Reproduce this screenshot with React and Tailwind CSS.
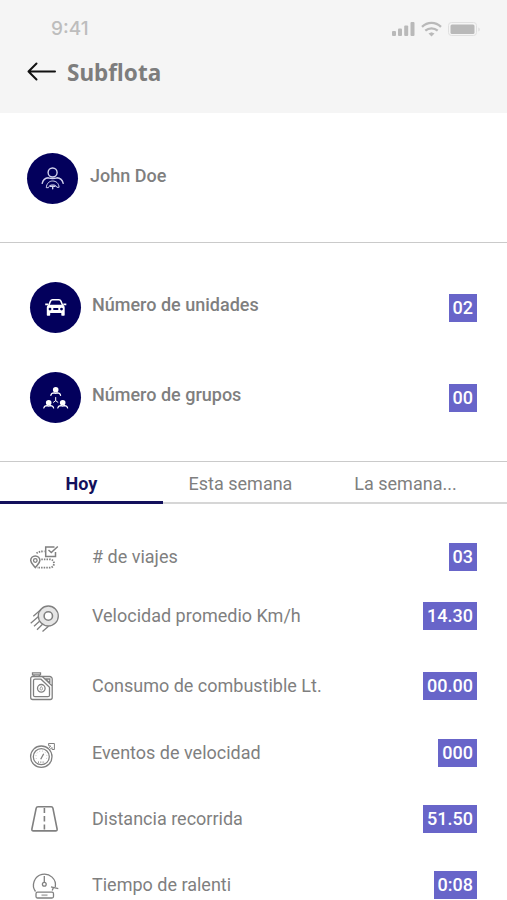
import { useState } from 'react'

const DriverIcon = () => (
  <svg width="51" height="51" viewBox="0 0 51 51" fill="none" stroke="#d3d3ee" strokeWidth="1.400" strokeLinecap="round">
    <circle cx="25.6" cy="19.5" r="4.5" />
    <path d="M15.2 30.3c.8-3.3 2.8-5.3 6-5.5 2.6.8 6.2.8 8.8 0 3.200.2 5.400 2.200 6.200 5.500" />
    <path d="M19.3 34.300c.3-4 3-6.300 6.400-6.300s6.100 2.300 6.400 6.300h-2.200c-.5-1.600-2-2.400-4.200-2.400s-3.700.8-4.200 2.400z" strokeWidth="1" />
    <path d="M23.400 33.300h4.600M25.700 33v2.700" strokeWidth="1.400" />
  </svg>
)

const CarIcon = () => (
  <svg width="51" height="51" viewBox="0 0 51 51" fill="none">
    <path d="M18.700 23.500l1.800-4.400c.4-1 1-1.400 2-1.400h6.400c1 0 1.600.4 2 1.400l1.800 4.400" stroke="#fff" strokeWidth="1.500" />
    <path d="M15.200 21.600h3v1.600h-3zM33.300 21.600h3v1.600h-3z" fill="#fff" />
    <path fillRule="evenodd" fill="#fff" d="M18.500 22.800h14.500c1.100.7 1.700 1.700 1.700 3v7c0 .6-.3 1-1 1h-1.400c-.7 0-1-.4-1-1v-1.700H20.200v1.700c0 .6-.3 1-1 1h-1.400c-.7 0-1-.4-1-1v-7c0-1.300.6-2.300 1.700-3zM20 25.700a1.400 1.400 0 1 0 0 2.800 1.400 1.400 0 0 0 0-2.800zM31.500 25.700a1.400 1.400 0 1 0 0 2.800 1.400 1.400 0 0 0 0-2.800zM23.300 26v2h5v-2z" />
  </svg>
)

const GroupIcon = () => (
  <svg width="51" height="51" viewBox="0 0 51 51" fill="none" stroke="#fff" strokeWidth="1.200" strokeLinecap="round">
    <g fill="#fff" stroke="none">
      <circle cx="25.700" cy="17.800" r="2.800" />
      <circle cx="18.700" cy="30.800" r="2.800" />
      <circle cx="32.700" cy="30.800" r="2.800" />
    </g>
    <path d="M20.800 23.300c.3-1.700 1.500-2.400 3.200-2.400 1 .5 2.400.5 3.400 0 1.700 0 2.900.7 3.200 2.400" />
    <path d="M13.800 36c.3-1.700 1.500-2.400 3.200-2.400 1 .5 2.400.5 3.400 0 1.700 0 2.900.7 3.200 2.400" />
    <path d="M27.800 36c.3-1.700 1.500-2.400 3.200-2.400 1 .5 2.400.5 3.400 0 1.700 0 2.900.7 3.200 2.400" />
    <path d="M25.700 25.500v3.200l-2.200 1.600M25.700 28.700l2.200 1.600" strokeWidth="1" />
  </svg>
)

const TripsIcon = () => (
  <>
    <path d="M26.500 4H17.700v9.500h9.800V9" strokeWidth="1.500" />
    <path d="M20.500 7l2.800 2.500 6.500-6" strokeWidth="1.500" />
    <path d="M7.300 24.500c-2-2.600-4.600-4.500-4.600-7a4.600 4.600 0 0 1 9.200 0c0 2.500-2.600 4.400-4.600 7z" strokeWidth="1.500" />
    <circle cx="7.300" cy="17.500" r="1.800" />
    <path d="M8.500 10.300c2-1.500 4.500-2 8-2M13.300 16.300h8.500c2.500 0 4.200 2 4.200 4.200s-1.700 4.200-4.200 4.200H9" strokeWidth="1.800" strokeDasharray="1.500 1.100" />
  </>
)

const SpeedIcon = () => (
  <>
    <circle cx="20.300" cy="14" r="7.200" stroke="#e6e6e6" strokeWidth="5" />
    <circle cx="20.300" cy="14" r="10" />
    <circle cx="20.300" cy="14" r="4.200" strokeWidth="1.600" />
    <path d="M5.300 14.300l8-7M2.700 21.300l7.500-6.500M6 24.300l5.500-5M9 27.800l5.500-5.600M14.500 29.500l6-5.300" />
  </>
)

const FuelIcon = () => (
  <>
    <path d="M13.500 4.500h8a2.500 2.500 0 0 1 2.700 2.500v18.500a2 2 0 0 1-2 2h-17.500a2 2 0 0 1-2-2V6.500a2 2 0 0 1 2-2z" />
    <path d="M4.500.8h8v2h-8zM6 3v1.500M11.300 3v1.500" />
    <path d="M13 7.200H7a1.500 1.500 0 0 0-1.500 1.500v14.500a1.500 1.500 0 0 0 1.500 1.500h13a1.500 1.500 0 0 0 1.500-1.500v-8L13 7.200zM14.500 4.800l9.500 9M17.500 7h4.300v4z" />
    <circle cx="13.300" cy="16.300" r="3.800" />
    <path d="M13.300 14.500c-2 2.200-1.300 3.500 0 3.500s2-1.300 0-3.500z" strokeWidth=".8" />
  </>
)

const EventsIcon = () => (
  <>
    <circle cx="13.300" cy="17.700" r="10.700" />
    <circle cx="13.300" cy="17.700" r="8" />
    <path d="M12.700 20.300l3-5.500" strokeWidth="1.300" />
    <path d="M8.500 20a5.500 5.500 0 1 1 9.800 0" stroke="#b0b0b0" strokeWidth="1" strokeDasharray=".8 2.200" />
    <path d="M10 23.200h7" strokeDasharray="1 1.300" />
    <path d="M20.500 9.300l2.300-2.200-2-.2-.3-2.400h5.900v6h-2.300l-.2-2-2.300 2.300" strokeWidth="1" />
  </>
)

const RoadIcon = () => (
  <>
    <path d="M10 1.800h13.200c1 0 1.500.5 1.700 1.400l4.200 20.800c.2 1.200-.3 1.900-1.500 1.900H5.400c-1.200 0-1.700-.7-1.500-1.900L8.200 3.200c.2-.9.800-1.400 1.800-1.400z" strokeWidth="1.600" />
    <path d="M16.400 3v5M16.400 11v5.500M16.400 19.500v5" strokeWidth="1.600" />
  </>
)

const IdleIcon = () => (
  <>
    <path d="M7.500 20.500a11 11 0 1 1 19.800-4.500" />
    <path d="M16.300 5v6.300M23 15.800l7.300 1.900M25.500 16.500l-1.300 3" />
    <circle cx="16.300" cy="13.300" r="1.900" />
    <rect x="8" y="21.200" width="17.500" height="5.800" rx="1.500" />
    <path d="M13.500 24.200h6" stroke="#b5b5b5" strokeWidth="1.800" />
  </>
)

const tabs = [
  { name: 'Hoy', width: 'w-[163px]' },
  { name: 'Esta semana', width: 'w-[155px]' },
  { name: 'La semana...', width: 'w-[175px]' },
]

const stats = [
  { label: '# de viajes', value: '03', icon: TripsIcon, margin: 'mt-[39px]' },
  { label: 'Velocidad promedio Km/h', value: '14.30', icon: SpeedIcon, margin: 'mt-[31px]' },
  { label: 'Consumo de combustible Lt.', value: '00.00', icon: FuelIcon, margin: 'mt-[42px]' },
  { label: 'Eventos de velocidad', value: '000', icon: EventsIcon, margin: 'mt-[39px]' },
  { label: 'Distancia recorrida', value: '51.50', icon: RoadIcon, margin: 'mt-[38px]' },
  { label: 'Tiempo de ralenti', value: '0:08', icon: IdleIcon, margin: 'mt-[38px]' },
]

function Badge({ children }) {
  return (
    <span className="ml-auto flex h-7 items-center bg-[#6865c9] px-1 text-lg font-medium text-white">
      {children}
    </span>
  )
}

function Avatar({ children }) {
  return <div className="h-[51px] w-[51px] shrink-0 overflow-hidden rounded-full bg-[#03005c]">{children}</div>
}

function StatusBar() {
  return (
    <div className="flex h-[57px] items-center justify-between pr-[25px] pl-[51px]">
      <span className="font-['Inter','Liberation_Sans',sans-serif] text-[19px] font-medium text-[#bdbdbd]">9:41</span>
      <svg width="92" height="18" viewBox="0 0 92 18" fill="none">
        <g fill="#b9b9b9">
          <rect x="2" y="11" width="4" height="5" rx="1" />
          <rect x="8" y="8.500" width="4" height="7.500" rx="1" />
          <rect x="14.200" y="5.500" width="4" height="10.500" rx="1" />
          <rect x="20.500" y="2" width="4" height="14" rx="1" />
          <path d="M41.500 12.300l3 1.300-3 3-3-3z" />
        </g>
        <path d="M32 6.900c5.500-5.300 13.500-5.300 19 0M35.300 10.700c3.600-3.200 8.800-3.200 12.400 0" stroke="#b9b9b9" strokeWidth="2.300" />
        <rect x="58.500" y="2.500" width="28" height="13" rx="3" stroke="#e0e0e0" />
        <rect x="60.500" y="4.500" width="24" height="9.500" rx="1.500" fill="#b9b9b9" />
        <path d="M88.500 7.500v4c1.500-.8 1.500-3.200 0-4z" fill="#d5d5d5" />
      </svg>
    </div>
  )
}

export default function App() {
  const [active, setActive] = useState('Hoy')

  return (
    <main className="h-[900px] w-full overflow-hidden bg-white font-['Roboto','Liberation_Sans',sans-serif] text-lg whitespace-nowrap text-[#7f7f7f]">
      <header className="h-[113px] bg-[#f5f5f5]">
        <StatusBar />
        <div className="flex h-[30px] items-center gap-[11px] pl-[27px]">
          <svg width="29" height="20" viewBox="0 0 29 20" fill="none" stroke="#111" strokeWidth="2" strokeLinecap="round" strokeLinejoin="round">
            <path d="M28 9.500H1.500M9.500 1.500l-8 8 8 8" />
          </svg>
          <h1 className="font-['Noto_Sans','Open_Sans',sans-serif] text-[22.500px] font-bold text-[#7d7d7d]">Subflota</h1>
        </div>
      </header>

      <section className="flex h-[130px] items-center border-b border-[#cacaca] pl-[27px] pt-px">
        <Avatar><DriverIcon /></Avatar>
        <span className="mb-1 ml-3 font-medium">John Doe</span>
      </section>

      <section className="flex h-[219px] flex-col gap-[39px] border-b border-[#cacaca] pt-[39px] pr-[30px] pl-[30px]">
        <div className="flex items-center">
          <Avatar><CarIcon /></Avatar>
          <span className="mb-[5px] ml-[11px] font-medium">Número de unidades</span>
          <Badge>02</Badge>
        </div>
        <div className="flex items-center">
          <Avatar><GroupIcon /></Avatar>
          <span className="mb-[5px] ml-[11px] font-medium">Número de grupos</span>
          <Badge>00</Badge>
        </div>
      </section>

      <nav className="flex h-[42px]">
        {tabs.map(({ name, width }) => (
          <button
            key={name}
            onClick={() => setActive(name)}
            className={`${width} ${
              active === name
                ? 'border-b-[3px] border-[#13105c] pt-1 font-bold text-[#13105c]'
                : 'border-b-2 border-[#d6d6d6] pt-[3px]'
            }`}
          >
            {name}
          </button>
        ))}
        <div className="flex-1 border-b-2 border-[#d6d6d6]" />
      </nav>

      <section className="pr-[30px] pl-7">
        {stats.map(({ label, value, icon: Icon, margin }) => (
          <div key={label} className={`flex h-7 items-center ${margin}`}>
            <svg width="32" height="28" viewBox="0 0 32 28" fill="none" stroke="#808080" strokeWidth="1.300" className="shrink-0 overflow-visible">
              <Icon />
            </svg>
            <span className="ml-8">{label}</span>
            <Badge>{value}</Badge>
          </div>
        ))}
      </section>
    </main>
  )
}
